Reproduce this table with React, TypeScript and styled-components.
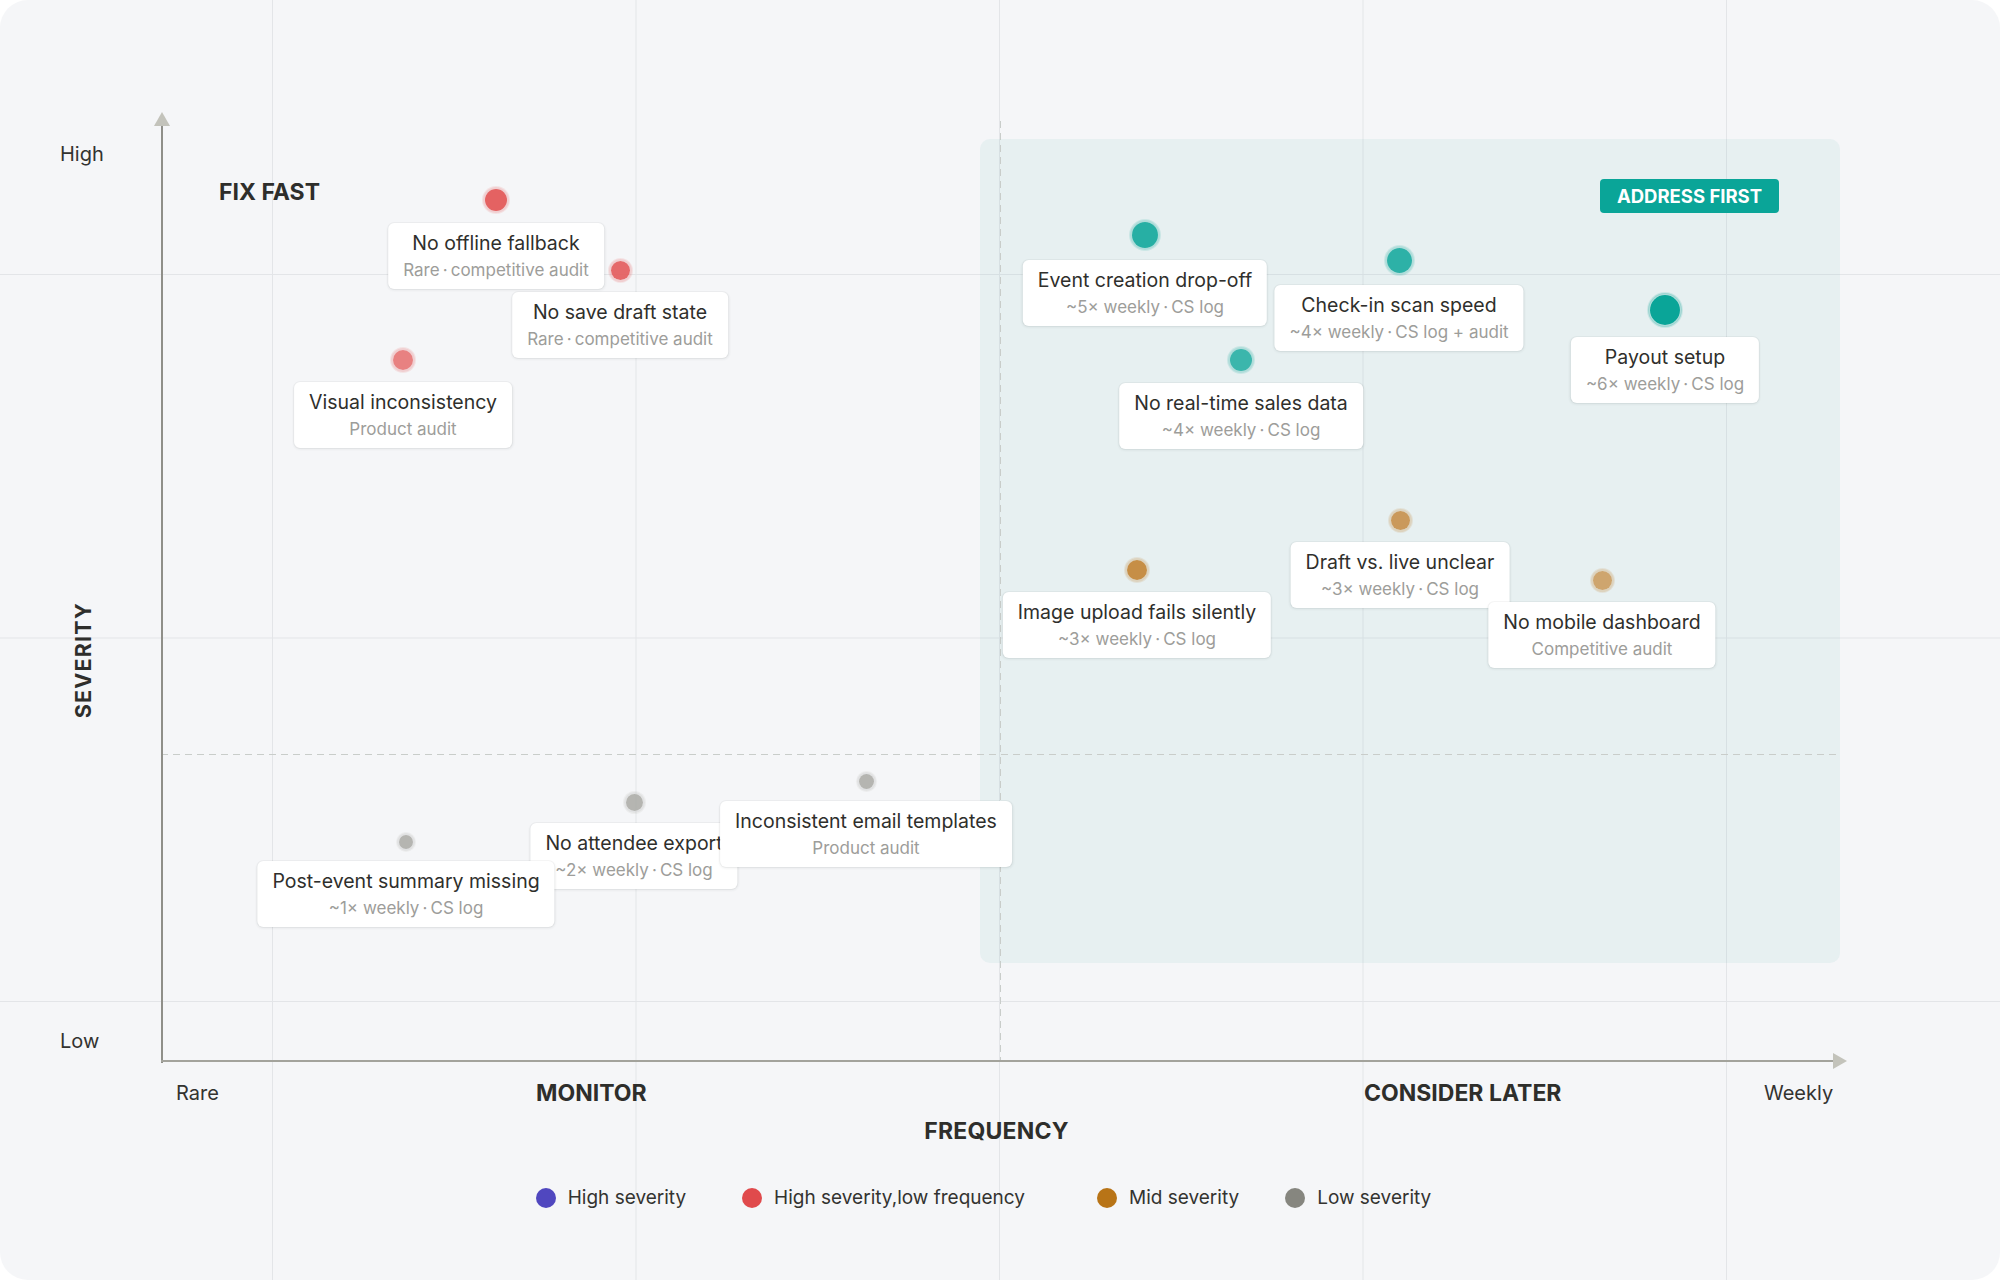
import styled, { createGlobalStyle } from "styled-components";

const GlobalStyle = createGlobalStyle`
  html, body {
    margin: 0;
    padding: 0;
    background: #ffffff;
  }
  body {
    font-family: Inter, "Noto Sans", "Liberation Sans", sans-serif;
    color: #2f2f2c;
  }
`;

// plot origin sits at page x = 161
const PLOT_LEFT = 161;

const points: Point[] = [
  { x: 634, y: 802, d: 21, color: "169, 169, 165", alpha: 0.85, title: "No attendee export", sub: "~2× weekly · CS log" },
  { x: 866, y: 781, d: 19, color: "169, 169, 165", alpha: 0.85, title: "Inconsistent email templates", sub: "Product audit" },
  { x: 406, y: 842, d: 18, color: "169, 169, 165", alpha: 0.85, title: "Post-event summary missing", sub: "~1× weekly · CS log" },
  { x: 496, y: 200, d: 26, color: "227, 90, 90", alpha: 0.95, title: "No offline fallback", sub: "Rare · competitive audit" },
  { x: 620, y: 270, d: 23, color: "227, 90, 90", alpha: 0.9, title: "No save draft state", sub: "Rare · competitive audit" },
  { x: 403, y: 360, d: 24, color: "227, 90, 90", alpha: 0.75, title: "Visual inconsistency", sub: "Product audit" },
  { x: 1145, y: 235, d: 30, color: "10, 165, 152", alpha: 0.87, title: "Event creation drop-off", sub: "~5× weekly · CS log" },
  { x: 1399, y: 260, d: 29, color: "10, 165, 152", alpha: 0.84, title: "Check-in scan speed", sub: "~4× weekly · CS log + audit" },
  { x: 1665, y: 310, d: 34, color: "10, 165, 152", alpha: 1, title: "Payout setup", sub: "~6× weekly · CS log" },
  { x: 1241, y: 360, d: 26, color: "10, 165, 152", alpha: 0.78, title: "No real-time sales data", sub: "~4× weekly · CS log" },
  { x: 1137, y: 570, d: 24, color: "192, 124, 40", alpha: 0.85, title: "Image upload fails silently", sub: "~3× weekly · CS log" },
  { x: 1400, y: 520, d: 23, color: "192, 124, 40", alpha: 0.75, title: "Draft vs. live unclear", sub: "~3× weekly · CS log" },
  { x: 1602, y: 580, d: 23, color: "192, 124, 40", alpha: 0.65, title: "No mobile dashboard", sub: "Competitive audit" },
];

const legend = [
  { label: "High severity", color: "#5047bf", space: 56 },
  { label: "High severity,low frequency", color: "#e04a4c", space: 72 },
  { label: "Mid severity", color: "#b87417", space: 46 },
  { label: "Low severity", color: "#86867f", space: 0 },
];

export default function App() {
  return (
    <>
      <GlobalStyle />
      <Page>
        <YLabels>
          <Tick>High</Tick>
          <AxisTitleCell>
            <VerticalTitle>SEVERITY</VerticalTitle>
          </AxisTitleCell>
          <Tick>Low</Tick>
        </YLabels>

        <Plot>
          <Quadrant />
          <VDashed />
          <HDashed />
          <YAxis />
          <XAxis />
          <QuadrantLabel>FIX FAST</QuadrantLabel>
          <Badge>ADDRESS FIRST</Badge>
          {points.map((p) => (
            <PointMark key={p.title} {...p} />
          ))}
        </Plot>

        <Bottom>
          <XLabels>
            <Tick>Rare</Tick>
            <QuadrantText>MONITOR</QuadrantText>
            <QuadrantText>CONSIDER LATER</QuadrantText>
            <Tick>Weekly</Tick>
          </XLabels>
          <FreqTitle>FREQUENCY</FreqTitle>
          <Legend>
            {legend.map((l) => (
              <LegendItem key={l.label} $space={l.space}>
                <LegendDot $color={l.color} />
                {l.label}
              </LegendItem>
            ))}
          </Legend>
        </Bottom>
      </Page>
    </>
  );
}

function PointMark({ x, y, d, color, alpha, title, sub }: Point) {
  const left = x - PLOT_LEFT;
  return (
    <>
      <Dot $x={left} $y={y} $d={d} $color={color} $alpha={alpha} />
      <Card $x={left} $y={y + d / 2 + 10}>
        <CardTitle>{title}</CardTitle>
        <CardSub>{sub.replace(/ · /g, "\u2009·\u2009")}</CardSub>
      </Card>
    </>
  );
}

const Page = styled.div`
  width: 2000px;
  height: 1280px;
  box-sizing: border-box;
  overflow: hidden;
  border-radius: 28px;
  background-color: #f5f6f8;
  background-image:
    linear-gradient(to right, #e3e5e8 1px, transparent 1px),
    linear-gradient(to bottom, #e3e5e8 1px, transparent 1px);
  background-size: 363.5px 363.5px;
  background-position: 272px 274px;
  display: grid;
  grid-template-columns: 161px 1679px;
  grid-template-rows: 1062px 1fr;
`;

const Tick = styled.div`
  font-size: 20px;
  line-height: 28px;
  color: #333330;
  white-space: nowrap;
`;

const YLabels = styled.div`
  display: grid;
  grid-template-rows: 28px 1fr 28px;
  padding: 140px 0 7px 60px;
`;

const AxisTitleCell = styled.div`
  display: flex;
  align-items: center;
  padding-top: 126px;
  padding-left: 10px;
`;

const VerticalTitle = styled.div`
  writing-mode: vertical-rl;
  transform: rotate(180deg);
  font-size: 21.5px;
  font-weight: 700;
  letter-spacing: 1.2px;
  line-height: 26px;
  color: #2e2e2b;
`;

const Plot = styled.div`
  position: relative;
`;

const Quadrant = styled.div`
  position: absolute;
  left: 819px;
  top: 139px;
  width: 860px;
  height: 824px;
  border-radius: 10px;
  background: rgba(120, 195, 190, 0.11);
`;

const VDashed = styled.div`
  position: absolute;
  left: 839px;
  top: 121px;
  width: 1px;
  height: 940px;
  background: repeating-linear-gradient(to bottom, #c9cdca 0 7px, transparent 7px 12px);
`;

const HDashed = styled.div`
  position: absolute;
  left: 0;
  top: 754px;
  width: 1679px;
  height: 1px;
  background: repeating-linear-gradient(to right, #c9cdca 0 7px, transparent 7px 12px);
`;

const YAxis = styled.div`
  position: absolute;
  left: 0;
  top: 124px;
  width: 2px;
  height: 939px;
  background: #8f8f89;

  &::before {
    content: "";
    position: absolute;
    left: -7px;
    top: -12px;
    border-left: 8px solid transparent;
    border-right: 8px solid transparent;
    border-bottom: 14px solid #c3c3bb;
  }
`;

const XAxis = styled.div`
  position: absolute;
  left: 0;
  top: 1060px;
  width: 1674px;
  height: 2px;
  background: #a3a39c;

  &::after {
    content: "";
    position: absolute;
    right: -12px;
    top: -7px;
    border-top: 8px solid transparent;
    border-bottom: 8px solid transparent;
    border-left: 14px solid #c3c3bb;
  }
`;

const QuadrantText = styled.div`
  font-size: 23px;
  font-weight: 700;
  line-height: 28px;
  color: #2e2e2b;
  white-space: nowrap;
`;

const QuadrantLabel = styled(QuadrantText)`
  position: absolute;
  left: 58px;
  top: 178px;
`;

const Badge = styled.div`
  position: absolute;
  left: 1439px;
  top: 179px;
  width: 179px;
  height: 34px;
  border-radius: 4px;
  background: #0aa598;
  color: #ffffff;
  font-size: 18.5px;
  font-weight: 700;
  display: flex;
  align-items: center;
  justify-content: center;
`;

const Dot = styled.div.attrs<{ $x: number; $y: number; $d: number }>((p) => ({
  style: { left: p.$x - p.$d / 2, top: p.$y - p.$d / 2, width: p.$d, height: p.$d },
}))<{ $x: number; $y: number; $d: number; $color: string; $alpha: number }>`
  position: absolute;
  box-sizing: border-box;
  border-radius: 50%;
  background: rgba(${(p) => p.$color}, ${(p) => p.$alpha});
  border: 2px solid rgba(${(p) => p.$color}, 0.25);
  background-clip: padding-box;
  box-shadow: 0 0 0 1px rgba(${(p) => p.$color}, 0.12);
`;

const Card = styled.div.attrs<{ $x: number; $y: number }>((p) => ({
  style: { left: p.$x, top: p.$y },
}))<{ $x: number; $y: number }>`
  position: absolute;
  transform: translateX(-50%);
  background: #ffffff;
  border-radius: 6px;
  padding: 9px 15px 8px;
  box-shadow: 0 1px 3px rgba(30, 40, 40, 0.09), 0 0 0 1px rgba(30, 40, 40, 0.03);
  text-align: center;
  white-space: nowrap;
`;

const CardTitle = styled.div`
  font-size: 19.5px;
  line-height: 23px;
  color: #2f2f2c;
`;

const CardSub = styled.div`
  margin-top: 4px;
  font-size: 17px;
  line-height: 22px;
  color: #9d9d9a;
`;

const Bottom = styled.div`
  grid-column: 2;
  display: flex;
  flex-direction: column;
  padding-top: 17px;
`;

const XLabels = styled.div`
  display: grid;
  grid-template-columns: 375px 813px 400px 1fr;
  padding-left: 15px;

  & > :nth-child(2) {
    margin-left: -15px;
  }
`;

const FreqTitle = styled(QuadrantText)`
  margin-top: 10px;
  margin-right: 8px;
  align-self: center;
  letter-spacing: 0.2px;
`;

const Legend = styled.div`
  margin-top: 39px;
  padding-right: 34px;
  display: flex;
  justify-content: center;
`;

const LegendItem = styled.div<{ $space: number }>`
  display: flex;
  align-items: center;
  gap: 12px;
  margin-right: ${(p) => p.$space}px;
  font-size: 19px;
  line-height: 28px;
  color: #333330;
`;

const LegendDot = styled.span<{ $color: string }>`
  width: 20px;
  height: 20px;
  border-radius: 50%;
  background: ${(p) => p.$color};
`;

interface Point {
  x: number;
  y: number;
  d: number;
  color: string;
  alpha: number;
  title: string;
  sub: string;
}
